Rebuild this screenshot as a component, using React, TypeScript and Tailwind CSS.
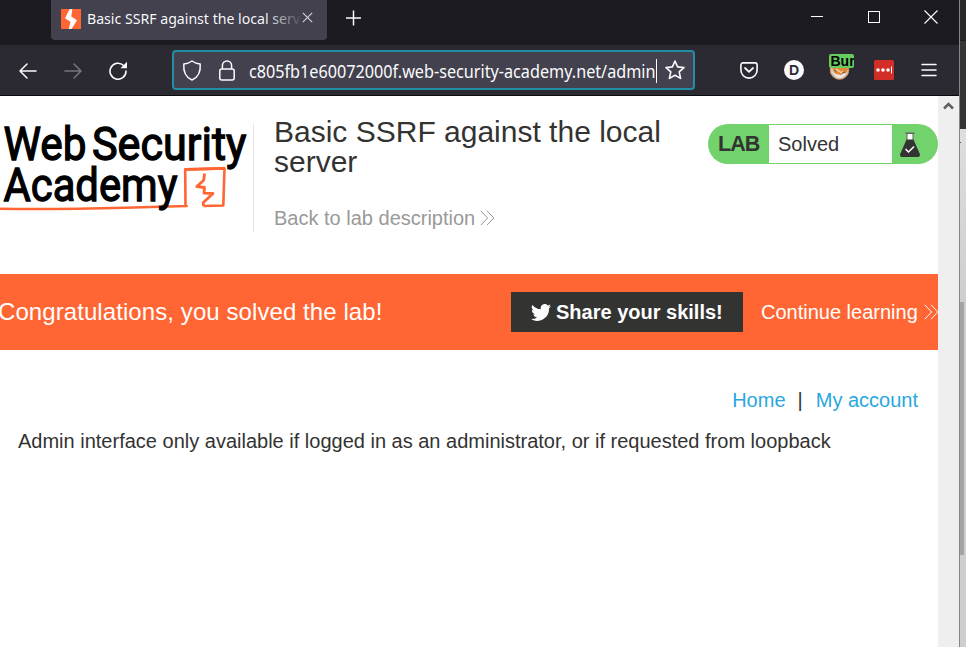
import type { ReactNode } from "react";

function Bolt({ className }: { className: string }) {
  return (
    <svg className={className} viewBox="0 0 20 20">
      <rect width="20" height="20" fill="#ff6633" />
      <path d="M8.700 0h2.600L10.300 7.500l5.700 3.700L10.500 20H7.800l1.700-7.200L4 9.300z" fill="#fff" />
    </svg>
  );
}

function Cell({ className, children }: { className: string; children: ReactNode }) {
  return <div className={"flex shrink-0 items-center justify-center " + className}>{children}</div>;
}

function TitleBar() {
  return (
    <div className="flex h-[45px] bg-[#1c1b22] text-[#fbfbfe]">
      <div className="ml-[51px] flex h-10 w-[276px] items-center rounded-b bg-[#42414d] pb-[3px] pl-[10px]">
        <Bolt className="size-5 shrink-0" />
        <svg className="ml-1.5 h-6 w-[215px] shrink-0" viewBox="0 0 215 24">
          <defs>
            <linearGradient id="fade" gradientUnits="userSpaceOnUse" x1="178" x2="216" y1="0" y2="0">
              <stop offset="0" stopColor="#fbfbfe" />
              <stop offset="1" stopColor="#42414d" />
            </linearGradient>
          </defs>
          <text x="0" y="17" fontSize="15" textLength="213" lengthAdjust="spacingAndGlyphs" fill="url(#fade)" fontFamily="'Noto Sans', sans-serif">Basic SSRF against the local serv</text>
        </svg>
        <svg className="mb-[2px] ml-0 size-[11px] shrink-0" viewBox="0 0 11 11" stroke="#d5d4dc" strokeWidth="1.1">
          <path d="M.8.8l9.400 9.400M10.200.8L.8 10.200" />
        </svg>
      </div>
      <svg className="ml-[19px] mt-[10px] size-4" viewBox="0 0 16 16" stroke="#fbfbfe" strokeWidth="1.500">
        <path d="M7.500.5v15M0 8h15" />
      </svg>
      <div className="ml-auto mr-[21px] mt-[10px] flex h-[14px] items-center">
        <div className="mb-px mr-[45px] h-px w-3 bg-white" />
        <div className="mr-[44px] size-3 border border-white" />
        <svg className="size-[14px]" viewBox="0 0 14 14" stroke="#fff" strokeWidth="1.100">
          <path d="M.5.500l13 13M13.500.500l-13 13" />
        </svg>
      </div>
    </div>
  );
}

function UrlField() {
  return (
    <div className="ml-[31px] flex h-10 w-[523px] items-center rounded-[4px] border-2 border-[#228da5] bg-[#42414d] pl-[8px]">
      <svg className="h-[21px] w-5 shrink-0" viewBox="0 0 20 21" fill="none" stroke="#fbfbfe" strokeWidth="1.500" strokeLinejoin="round">
        <path d="M10 1c2.500 1.900 5 2.700 8.200 2.900C18.800 11.500 16 17.500 10 20 4 17.500 1.200 11.500 1.800 3.900 5 3.700 7.500 2.900 10 1z" />
      </svg>
      <svg className="ml-[17px] h-[21px] w-4 shrink-0" viewBox="0 0 16 21" fill="none" stroke="#fbfbfe" strokeWidth="1.500">
        <rect x=".8" y="9" width="14.400" height="11" rx="2" />
        <path d="M3.400 9V5.500a4.600 4.600 0 0 1 9.200 0V9" />
      </svg>
      <svg className="ml-[14px] h-7 w-[407px] shrink-0" viewBox="0 0 407 28">
        <text x="0" y="22" fontSize="17.200" textLength="406.500" lengthAdjust="spacingAndGlyphs" fill="#fbfbfe" fontFamily="'Noto Sans', sans-serif">c805fb1e60072000f.web-security-academy.net/admin</text>
      </svg>
      <div className="mt-px h-6 w-px shrink-0 bg-white" />
      <svg className="ml-[8px] size-5 shrink-0" viewBox="0 0 20 20" fill="none" stroke="#fbfbfe" strokeWidth="1.600" strokeLinejoin="round">
        <path d="M10 1l2.600 5.900 6.400.7-4.800 4.300 1.400 6.500L10 15.200l-5.600 3.200 1.400-6.500L1 7.600l6.400-.7z" />
      </svg>
    </div>
  );
}

function Toolbar() {
  return (
    <div className="flex h-[51px] items-center border-b border-[#0c0c0d] bg-[#2b2a33]">
      <Cell className="ml-[5px] mt-px w-[46px]">
        <svg className="size-[18px]" viewBox="0 0 18 18" fill="none" stroke="#fbfbfe" strokeWidth="1.500" strokeLinecap="round" strokeLinejoin="round"><path d="M17 9H1M8 2L1 9l7 7" /></svg>
      </Cell>
      <Cell className="mt-px w-[44px]">
        <svg className="size-[18px]" viewBox="0 0 18 18" fill="none" stroke="#77767e" strokeWidth="1.500" strokeLinecap="round" strokeLinejoin="round"><path d="M1 9h16M10 2l7 7-7 7" /></svg>
      </Cell>
      <Cell className="w-[46px]">
        <svg className="h-[19px] w-[18px]" viewBox="0 0 18 19" fill="none" stroke="#fbfbfe" strokeWidth="1.600" strokeLinecap="round"><path d="M14.600 4.500A8 8 0 1 0 17 10" /><path d="M18 .8v6.500h-6.500z" fill="#fbfbfe" stroke="none" /></svg>
      </Cell>
      <UrlField />
      <Cell className="ml-[31px] w-[46px]">
        <svg className="h-[17px] w-[18px]" viewBox="0 0 18 17" fill="none" stroke="#fbfbfe" strokeWidth="1.600" strokeLinecap="round" strokeLinejoin="round"><path d="M3 .9h12a2.100 2.100 0 0 1 2.100 2.100v5a8.100 8.100 0 0 1-16.200 0V3A2.100 2.100 0 0 1 3 .9z" /><path d="M5 6l4 3.800L13 6" strokeWidth="1.800" /></svg>
      </Cell>
      <Cell className="w-[44px]">
        <div className="flex size-5 items-center justify-center rounded-full bg-[#fbfbfe] pt-px font-['Liberation_Sans',sans-serif] text-[14px] font-bold text-[#2b2a33]">D</div>
      </Cell>
      <Cell className="h-full w-[48px] pl-[2px]">
        <div className="relative mt-[-7px] h-[26px] w-[25px]">
          <svg className="absolute bottom-0 left-0 h-[25px] w-[25px]" viewBox="0 0 25 25">
            <circle cx="10.500" cy="15" r="9.300" fill="#c9c5c0" stroke="#d99055" strokeWidth="1" />
            <path d="M3 12h16c0 3-1 6-4 7.500l-4 1.500-5-2z" fill="#e8862f" />
            <path d="M2 16l5 3 5 1 3-2 2 1-4 4H8z" fill="#e9e4de" />
            <path d="M7 14l5 3.500 2-1" fill="none" stroke="#efe0cd" strokeWidth="1.200" />
            <path d="M5 15l2 1.500M13 18l3-1" stroke="#80563a" />
          </svg>
          <div className="absolute left-0 top-0 h-[14px] w-[25px] overflow-hidden rounded-[2px] bg-[#65cc60] pl-[2px] font-['Liberation_Sans',sans-serif] text-[14px] font-bold leading-[14px] text-black">Burp</div>
        </div>
      </Cell>
      <Cell className="w-[39px]">
        <svg className="size-5" viewBox="0 0 20 20"><rect width="20" height="20" rx="1.500" fill="#d32d27" /><circle cx="4" cy="10" r="1.800" fill="#fff" /><circle cx="9" cy="10" r="1.800" fill="#fff" /><circle cx="14" cy="10" r="1.800" fill="#fff" /><path d="M17.500 6.500v7" stroke="#fff" /></svg>
      </Cell>
      <Cell className="w-[51px]">
        <svg className="h-[14px] w-4" viewBox="0 0 16 14" stroke="#fbfbfe" strokeWidth="1.500" strokeLinecap="round"><path d="M1 1.500h14M1 7h14M1 12.500h14" /></svg>
      </Cell>
    </div>
  );
}

function Chevrons({ className }: { className: string }) {
  return (
    <svg className={className} viewBox="0 0 15 16" fill="none" stroke="currentColor" strokeWidth="1"><path d="M.8.8L7.600 8 .8 15.200M7 .8L13.800 8 7 15.200" /></svg>
  );
}

function Logo() {
  return (
    <svg className="h-[108px] w-[253px] shrink-0" viewBox="0 124 253 108">
      <g fill="#000" stroke="#000" strokeWidth="1.300" fontFamily="Roboto, sans-serif" fontWeight="400" fontSize="47">
        <text x="3.500" y="159.800" textLength="83" lengthAdjust="spacingAndGlyphs">Web</text>
        <text x="92" y="159.800" textLength="154.500" lengthAdjust="spacingAndGlyphs">Security</text>
      </g>
      <g fill="none" stroke="#ff6633" strokeLinejoin="round">
        <path d="M0 208.700Q55 209.500 125 207.700T185.500 206L185.200 169.500 224.500 168.500 223.300 205.500 203.500 206" strokeWidth="2.600" />
        <path d="M204.700 173.500L203.500 180.500 196.700 186.500 204.500 187.500 204 193.200 213 193.500 203.300 202.500V206" strokeWidth="2.800" />
        <path d="M184.500 169.500L225 168.300" strokeWidth="3" />
      </g>
      <text x="3.500" y="200.800" fill="#000" stroke="#000" strokeWidth="1.300" fontFamily="Roboto, sans-serif" fontWeight="400" fontSize="47" textLength="174" lengthAdjust="spacingAndGlyphs">Academy</text>
    </svg>
  );
}

function LabStatus() {
  return (
    <div className="flex h-10 w-[230px] items-center overflow-hidden rounded-full bg-[#72d36d] text-[20px]">
      <span className="w-[61px] pl-[10px] pt-px text-[21.500px] font-bold tracking-[-0.9px]">LAB</span>
      <span className="flex h-[38px] w-[123px] items-center bg-white pl-[9px]">Solved</span>
      <svg className="ml-2 h-[25px] w-5" viewBox="0 0 20 25">
        <path d="M7 1.500h6v7H7z" fill="#fff" /><path d="M5.500.5h9v1.500h-1v6.500h-1V2h-5v6.500h-1V2h-1z" fill="#62625f" />
        <path d="M6.500 7.500h7l6.300 14.500c.6 1.600-.2 3-1.900 3H2c-1.600 0-2.400-1.400-1.800-3z" fill="#333332" />
        <path d="M5.500 17l3 3 5.500-5.500" fill="none" stroke="#fff" strokeWidth="1.500" />
      </svg>
    </div>
  );
}

function LabPage() {
  return (
    <div className="w-[938px] bg-white font-['Liberation_Sans',Arial,sans-serif] text-[20px] text-[#333332]">
      <header className="flex h-[178px] pt-[28px]">
        <Logo />
        <div className="h-[108px] w-px bg-[#e5e5e5]" />
        <div className="-mt-[7px] ml-5 w-[434px]">
          <h1 className="w-[400px] text-[30px] leading-[30px]">Basic SSRF against the local server</h1>
          <a className="mt-[29px] flex h-[24px] items-center text-[#999]"><span>Back to lab description</span><Chevrons className="ml-[5px] h-4 w-[15px]" /></a>
        </div>
        <LabStatus />
      </header>
      <div className="flex h-[76px] items-center bg-[#ff6633] text-white">
        <span className="-ml-[2px] w-[513px] shrink-0 whitespace-nowrap text-[24px] tracking-[0.08px]">Congratulations, you solved the lab!</span>
        <button className="flex h-10 w-[232px] shrink-0 items-center bg-[#333332] pl-5 font-bold">
          <svg className="h-[17px] w-5" viewBox="0 0 20 17" fill="#fff"><path d="M20 2.100a8 8 0 0 1-2.400.700A4.200 4.200 0 0 0 19.400.400a8 8 0 0 1-2.600 1A4.100 4.100 0 0 0 9.800 5.200 11.700 11.700 0 0 1 1.400.900a4.200 4.200 0 0 0 1.300 5.600A4 4 0 0 1 .9 6v.1a4.200 4.200 0 0 0 3.300 4.100 4 4 0 0 1-1.900.1 4.100 4.100 0 0 0 3.800 2.900A8.300 8.300 0 0 1 0 15a11.700 11.700 0 0 0 18-10.400A8 8 0 0 0 20 2.100z" /></svg>
          <span className="ml-[5px] whitespace-nowrap">Share your skills!</span>
        </button>
        <span className="ml-[18px] shrink-0 whitespace-nowrap">Continue learning</span>
        <Chevrons className="-mr-1 ml-1.5 h-4 w-[15px] shrink-0" />
      </div>
      <nav className="mt-[38px] flex h-6 items-center justify-end pr-5 text-[#29a7de]">
        <a>Home</a><span className="ml-[12px] mr-[13px] text-[#333332]">|</span><a>My account</a>
      </nav>
      <p className="ml-[18px] mt-[17px] h-6 whitespace-nowrap leading-6">Admin interface only available if logged in as an administrator, or if requested from loopback</p>
    </div>
  );
}

export default function App() {
  return (
    <div className="flex h-[647px] w-[966px] overflow-hidden bg-white">
      <main className="flex w-[959px] flex-col">
        <TitleBar />
        <Toolbar />
        <div className="flex flex-1">
          <LabPage />
          <div className="flex w-[21px] justify-center bg-[#efefef] pt-[6px]">
            <svg className="h-[8px] w-[11px]" viewBox="0 0 11 8" fill="none" stroke="#606060" strokeWidth="2.500"><path d="M1 6.500L5.500 2 10 6.500" /></svg>
          </div>
        </div>
      </main>
      <aside className="flex w-[7px] flex-col border-l border-[#858585] bg-[#cecece]">
        <div className="h-10 bg-[#292929]" />
        <div className="h-[89px] border-t border-[#1c1c1c] bg-[#353535]" />
        <div className="h-[173px] bg-gradient-to-b from-[#dedede] to-[#cecece] pt-[13px]"><div className="h-px w-px bg-[#555]" /></div>
        <div className="h-[253px] w-1 bg-[#a3a3a3]" />
      </aside>
    </div>
  );
}
